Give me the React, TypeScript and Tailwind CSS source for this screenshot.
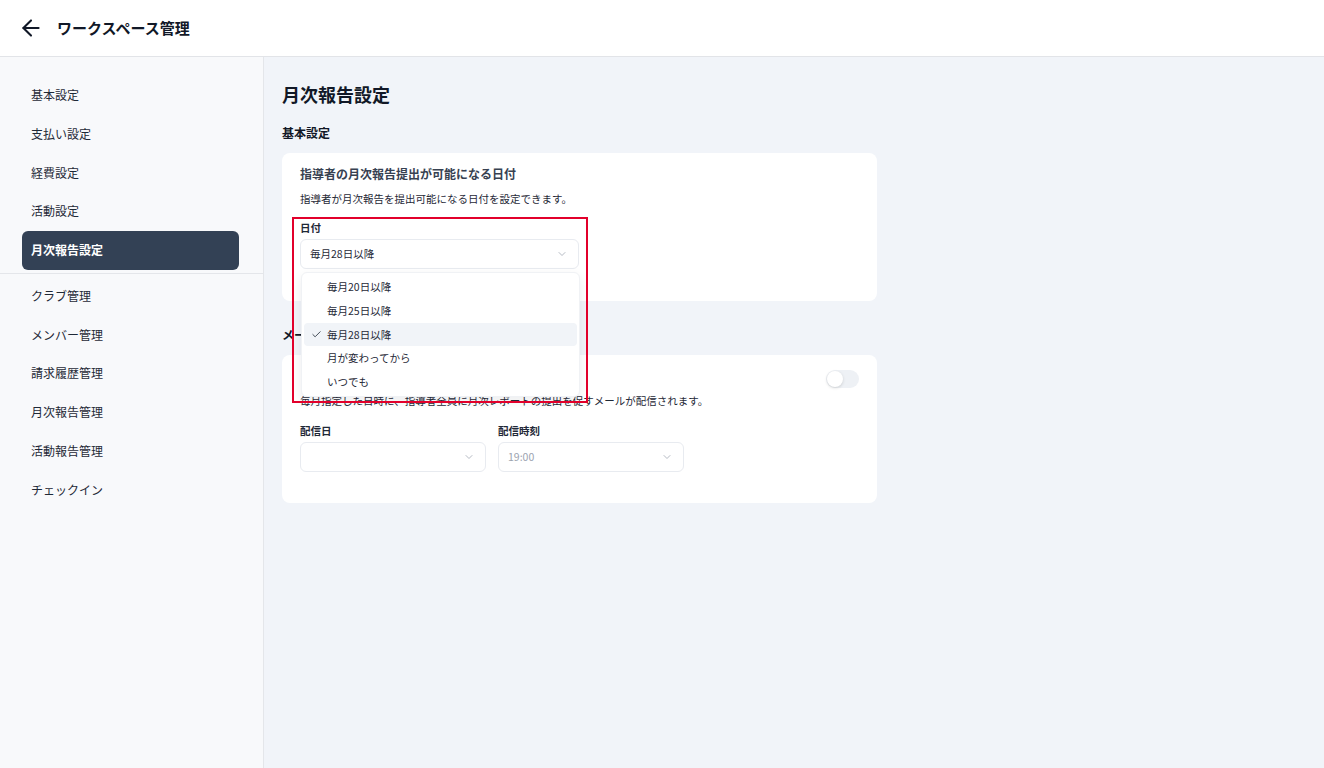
import { ArrowLeft, Check, ChevronDown } from 'lucide-react';

const topMenu = ['基本設定', '支払い設定', '経費設定', '活動設定'];
const bottomMenu = ['クラブ管理', 'メンバー管理', '請求履歴管理', '月次報告管理', '活動報告管理', 'チェックイン'];
const options = ['毎月20日以降', '毎月25日以降', '毎月28日以降', '月が変わってから', 'いつでも'];

function SidebarItem({ label, active }: { label: string; active?: boolean }) {
  return (
    <div
      className={
        active
          ? 'flex h-[39px] items-center rounded-md bg-[#334155] pl-[9px] text-[12px] font-bold text-white'
          : 'flex h-[38.7px] items-center pl-[9px] text-[12px] text-[#1f2937]'
      }
    >
      {label}
    </div>
  );
}

function SelectBox({ value, placeholder }: { value?: string; placeholder?: boolean }) {
  return (
    <div className="flex h-[30px] items-center justify-between rounded-md border border-[#e8ebf0] bg-white pl-[9px] pr-[10px]">
      <span className={placeholder ? 'text-[10.5px] text-[#9ca3af]' : 'text-[10.5px] text-[#1f2937]'}>{value}</span>
      <ChevronDown size={12} strokeWidth={1.5} className="text-[#9ca3af]" />
    </div>
  );
}

export default function App() {
  return (
    <div className="flex h-[768px] flex-col bg-white font-['Noto_Sans_CJK_JP','Noto_Sans',sans-serif] text-[#1f2937]">
      <header className="flex h-[57px] shrink-0 items-center border-b border-[#e2e4e8] bg-white pl-[18px]">
        <ArrowLeft size={26} strokeWidth={1.9} className="text-[#111827]" />
        <h1 className="ml-[13px] text-[15px] font-bold text-[#111827]">ワークスペース管理</h1>
      </header>

      <div className="flex flex-1">
        <aside className="w-[264px] shrink-0 border-r border-[#e4e6ea] bg-[#f8f9fb] pt-[19px]">
          <div className="pl-[22px] pr-[24px]">
            {topMenu.map((m) => (
              <SidebarItem key={m} label={m} />
            ))}
            <SidebarItem label="月次報告設定" active />
          </div>
          <div className="mt-[3px] border-t border-[#e4e6ea]" />
          <div className="pl-[22px] pr-[24px] pt-[3px]">
            {bottomMenu.map((m) => (
              <SidebarItem key={m} label={m} />
            ))}
          </div>
        </aside>

        <main className="flex-1 bg-[#f1f4f9] pl-[18px] pt-[25px]">
          <div className="w-[595px]">
            <h2 className="text-[18px] font-bold leading-[24px] text-[#111827]">月次報告設定</h2>
            <h3 className="mt-[19px] text-[12px] font-bold leading-[16px] text-[#111827]">基本設定</h3>

            <section className="relative mt-[12px] rounded-lg bg-white px-[18px] pb-[32px] pt-[13px]">
              <p className="text-[12px] font-bold leading-[16px] text-[#374151]">指導者の月次報告提出が可能になる日付</p>
              <p className="mt-[9px] text-[10.5px] leading-[16px] text-[#1f2937]">指導者が月次報告を提出可能になる日付を設定できます。</p>
              <div className="relative mt-[13px] w-[279px]">
                <p className="text-[10.5px] font-bold leading-[16px]">日付</p>
                <div className="mt-[3px]">
                  <SelectBox value="毎月28日以降" />
                </div>
                <div className="absolute left-[1px] top-full z-20 mt-[3px] w-[279px] rounded-md border border-[#f0f2f5] bg-white p-[2px] shadow-[0_4px_12px_rgba(15,23,42,0.08)]">
                  {options.map((o) => {
                    const selected = o === '毎月28日以降';
                    return (
                      <div
                        key={o}
                        className={
                          selected
                            ? 'flex h-[23.75px] items-center rounded bg-[#f1f4f8] pl-[7px] text-[10.5px]'
                            : 'flex h-[23.75px] items-center pl-[7px] text-[10.5px]'
                        }
                      >
                        <span className="flex w-[16px] items-center">
                          {selected && <Check size={11} strokeWidth={1.8} />}
                        </span>
                        {o}
                      </div>
                    );
                  })}
                </div>
              </div>
              <div className="pointer-events-none absolute left-[10px] top-[64px] z-30 h-[186px] w-[296px] border-2 border-[#e2002b]" />
            </section>

            <h3 className="mt-[26px] text-[12px] font-bold leading-[16px] text-[#111827]">メール配信設定</h3>

            <section className="mt-[12px] rounded-lg bg-white px-[18px] pb-[31px] pt-[15px]">
              <div className="flex h-[18px] items-center justify-between">
                <p className="text-[12px] font-bold text-[#374151]">リマインドメール</p>
                <div className="flex h-[18px] w-[33px] items-center rounded-full bg-[#eef1f5] px-[1px]">
                  <div className="h-[16px] w-[16px] rounded-full bg-white shadow-[0_1px_3px_rgba(0,0,0,0.15)]" />
                </div>
              </div>
              <p className="mt-[5px] text-[10.5px] leading-[16px] text-[#1f2937]">
                毎月指定した日時に、指導者全員に月次レポートの提出を促すメールが配信されます。
              </p>
              <div className="mt-[14px] flex gap-[12px]">
                <div className="w-[186px]">
                  <p className="text-[10.5px] font-bold leading-[16px]">配信日</p>
                  <div className="mt-[3px]">
                    <SelectBox />
                  </div>
                </div>
                <div className="w-[186px]">
                  <p className="text-[10.5px] font-bold leading-[16px]">配信時刻</p>
                  <div className="mt-[3px]">
                    <SelectBox value="19:00" placeholder />
                  </div>
                </div>
              </div>
            </section>
          </div>
        </main>
      </div>
    </div>
  );
}
